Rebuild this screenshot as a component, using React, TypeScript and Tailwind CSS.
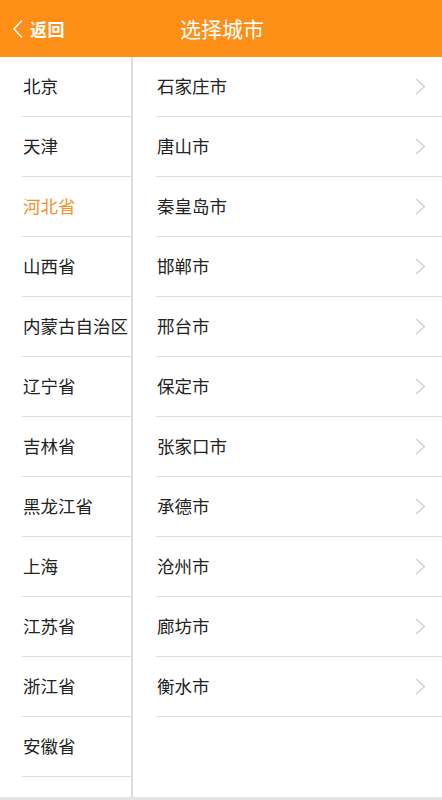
const provinces = [
  '北京',
  '天津',
  '河北省',
  '山西省',
  '内蒙古自治区',
  '辽宁省',
  '吉林省',
  '黑龙江省',
  '上海',
  '江苏省',
  '浙江省',
  '安徽省',
  '河南省',
];

const cities = [
  '石家庄市',
  '唐山市',
  '秦皇岛市',
  '邯郸市',
  '邢台市',
  '保定市',
  '张家口市',
  '承德市',
  '沧州市',
  '廊坊市',
  '衡水市',
];

const font = { fontFamily: '"Noto Sans CJK SC", "Noto Sans", sans-serif' };

function BackArrow() {
  return (
    <svg width="12" height="20" viewBox="0 0 12 20" fill="none">
      <polyline points="10,1.5 2,10 10,18.5" stroke="white" strokeWidth="1.6" />
    </svg>
  );
}

function Arrow() {
  return (
    <svg width="11" height="17" viewBox="0 0 11 17" fill="none">
      <polyline points="1,1 9.5,8.5 1,16" stroke="#cbcbcb" strokeWidth="1.2" />
    </svg>
  );
}

export default function App() {
  const active = '河北省';

  return (
    <div className="w-[442px] h-[800px] flex flex-col bg-white overflow-hidden" style={font}>
      <header className="h-[57px] shrink-0 bg-[#fd8f16] relative flex items-center">
        <button className="flex items-center gap-[6px] pl-[12px] text-white">
          <BackArrow />
          <span className="text-[17px] font-bold tracking-[0.5px]">返回</span>
        </button>
        <h1 className="absolute left-0 right-0 text-center text-white text-[21px] pointer-events-none pl-[2px]">
          选择城市
        </h1>
      </header>

      <div className="flex-1 flex overflow-hidden">
        <ul className="w-[131px] shrink-0 overflow-hidden">
          {provinces.map((p) => (
            <li key={p} className="ml-[22px] h-[60px] border-b border-[#dedede] flex items-center">
              <span
                className={`text-[17.5px] whitespace-nowrap pl-[1px] ${
                  p === active ? 'text-[#f0922c]' : 'text-[#222]'
                }`}
              >
                {p}
              </span>
            </li>
          ))}
        </ul>
        <div className="w-[2px] shrink-0 bg-[#dcdcdc]" />
        <ul className="flex-1">
          {cities.map((c) => (
            <li
              key={c}
              className="ml-[23px] h-[60px] border-b border-[#dedede] flex items-center justify-between pr-[16px]"
            >
              <span className="text-[17.5px] text-[#222] pl-[1px]">{c}</span>
              <Arrow />
            </li>
          ))}
        </ul>
      </div>

      <div className="h-[3px] shrink-0 bg-[#e4e4e4]" />
    </div>
  );
}
